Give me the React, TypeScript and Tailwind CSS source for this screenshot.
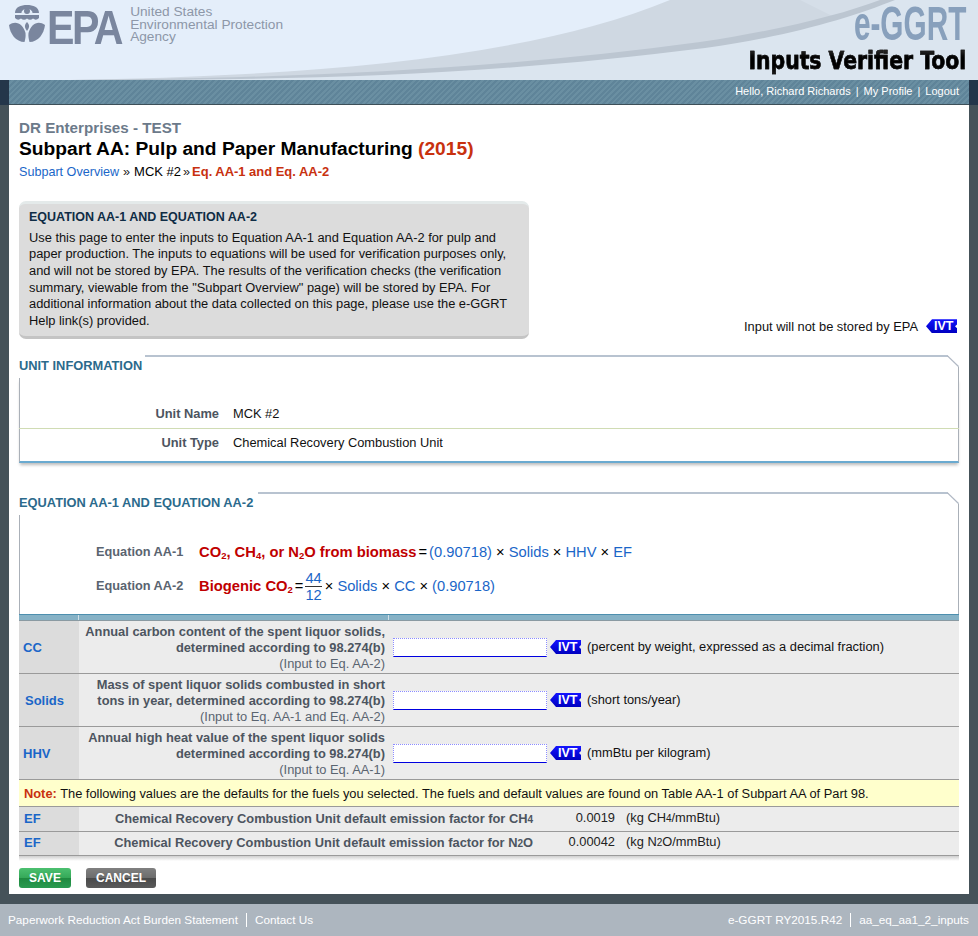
import React from "react";

const F = "font-['Liberation_Sans',Arial,sans-serif]";

function Ivt() {
  return (
    <span className="inline-flex h-[14px] w-[31px] shrink-0 items-center overflow-hidden pl-[8px] text-[12.5px] font-bold leading-none text-white bg-gradient-to-b from-[#1414ff] to-[#0000c0] [clip-path:polygon(0_50%,6px_0,100%_0,100%_36%,29px_50%,100%_64%,100%_100%,6px_100%)]">
      IVT
    </span>
  );
}

function Sec({ title, headW, children }: { title: string; headW: string; children: React.ReactNode }) {
  return (
    <section className="relative">
      <div className="flex h-[23px]">
        <h2 className={`shrink-0 pt-[4px] text-[12.85px] font-bold leading-[14px] text-[#2b6a8c] ${headW}`}>{title}</h2>
        <div className="grow border-r border-t-2 border-r-[#aab0b8] border-t-[#b8c3d0]" />
      </div>
      <svg className="absolute right-0 top-0 h-[12px] w-[12px]" viewBox="0 0 12 12">
        <polygon points="0,0 12,0 12,12" fill="#fff" />
        <path d="M0 .5 L11.5 11.5" stroke="#b0b8c4" strokeWidth="1.2" fill="none" />
      </svg>
      {children}
    </section>
  );
}

function Row({ sym, sw, l1, l2, l3, unit }: { sym: string; sw?: string; l1: string; l2: string; l3: string; unit: string }) {
  return (
    <div className="flex h-[53px] border-b border-[#9a9a9a] bg-[#ececec]">
      <div className={`flex w-[60px] shrink-0 items-center bg-[#dcdcdc] pt-[1px] text-[13px] font-bold text-[#1a66c8] ${sw ?? "pl-[4px]"}`}>{sym}</div>
      <div className="w-[310px] shrink-0 pr-[4px] pt-[3px] text-right text-[12.85px] leading-[16px]">
        <div className="font-bold text-[#4d5560]">{l1}</div>
        <div className="font-bold text-[#4d5560]">{l2}</div>
        <div className="text-[#5a6470]">{l3}</div>
      </div>
      <div className="flex grow items-center pl-[4px] text-[12.85px] text-[#111]">
        <div className="h-[19px] w-[154px] border border-dotted border-[#8c8cff] border-b-[#0000e0] bg-white [border-bottom-style:solid]" />
        <span className="ml-[3px] mr-[6px] flex"><Ivt /></span>
        <span>{unit}</span>
      </div>
    </div>
  );
}

function EfRow({ text, sub, tail, value, unit, h }: { text: string; sub: string; tail?: string; value: string; unit: React.ReactNode; h: string }) {
  return (
    <div className={`flex ${h} border-b border-[#9a9a9a] bg-[#ececec]`}>
      <div className="flex w-[60px] shrink-0 items-center bg-[#dcdcdc] pb-[1px] pl-[5px] text-[13px] font-bold text-[#1a66c8]">EF</div>
      <div className="flex w-[458px] shrink-0 items-center justify-end pb-[1px] pr-[4px] text-[12.85px] font-bold text-[#4d5560]">
        <span>{text}<span className="text-[10px]">{sub}</span>{tail}</span>
      </div>
      <div className="flex w-[78px] shrink-0 items-center justify-end pb-[3px] text-[12.85px] text-[#222]">{value}</div>
      <div className="flex items-center pb-[3px] pl-[11px] text-[12.85px] text-[#222]">{unit}</div>
    </div>
  );
}

export default function App() {
  return (
    <div className={`${F} h-[936px] w-[978px] overflow-hidden bg-[#455259]`}>
      {/* Header */}
      <header className="relative h-[80px] overflow-hidden bg-[#e4eefa]">
        <svg className="absolute inset-0 h-full w-full" viewBox="0 0 978 80" preserveAspectRatio="none">
          <path d="M70 80 C 290 76, 520 62, 670 0 L978 0 L978 80 Z" fill="#cfd8e2" />
          <path d="M800 0 L978 0 L978 30 L860 30 Z" fill="#d5dee8" />
          <path d="M70 80 C 300 78, 490 70, 700 42 C 780 30, 840 15, 880 0 L978 0 L978 80 Z" fill="#bcc6d1" />
          <path d="M110 80 C 320 80, 500 74, 705 48 C 790 36, 850 18, 895 0 L978 0 L978 80 Z" fill="#dbe5ef" />
        </svg>
        <div className="absolute left-[9px] top-[5px] flex items-start">
          <svg className="h-[37px] w-[36px]" viewBox="0 0 36 37" fill="#7a869e">
            <path d="M6 8 C6 2 12 0 18 0 C24 0 30 2 30 8 L23.5 8 C23.5 5.5 21 4 18 4 C15 4 12.5 5.5 12.5 8 Z" />
            <circle cx="18" cy="6" r="3" />
            <path d="M6 10 L30 10 L30 13 Q 27 16 24 13.5 Q 21 16 18 13.5 Q 15 16 12 13.5 Q 9 16 6 13 Z" />
            <path d="M0 20 C7 15 14 19 16.5 28 C16.8 31 16.4 34 15.5 37 C7 37 1 29 0 20 Z" />
            <path d="M36 20 C29 15 22 19 19.5 28 C19.2 31 19.6 34 20.5 37 C29 37 35 29 36 20 Z" />
            <path d="M18 17 C20.5 19.5 21 22 18 26 C15 22 15.5 19.5 18 17 Z" />
          </svg>
          <span className="ml-[2px] mr-[-11px] mt-[-6px] origin-left scale-x-[0.84] whitespace-nowrap text-[49px] font-bold leading-[56px] tracking-[-3px] text-[#7a869e]">EPA</span>
          <div className="ml-[6px] mt-[1px] whitespace-nowrap text-[13.7px] leading-[12.6px] text-[#8d97a8]">
            <div>United States</div>
            <div>Environmental Protection</div>
            <div>Agency</div>
          </div>
        </div>
        <div className="absolute right-[12px] top-0 origin-right scale-x-[0.62] text-[48px] font-bold leading-[48px] text-[#88a0bc]">e-GGRT</div>
        <div className="absolute right-[12px] top-[46px] origin-right scale-x-[0.815] bg-gradient-to-b from-[#444] via-[#000] to-[#222] bg-clip-text font-['DejaVu_Sans',sans-serif] text-[25px] font-bold leading-[30px] text-transparent [-webkit-text-stroke:0.5px_#111]">Inputs Verifier Tool</div>
      </header>

      {/* Nav */}
      <div className="flex h-[25px]">
        <div className="w-[9px] shrink-0 bg-[#24364a]" />
        <nav className="flex grow items-center justify-end gap-[5px] border-b border-[#3d4f58] bg-[repeating-linear-gradient(135deg,#5f8499_0,#5f8499_2px,#6a8fa2_2px,#6a8fa2_4px)] pb-[2px] pr-[10px] text-[11px] text-white">
          <span>Hello, Richard Richards</span><span>|</span><span>My Profile</span><span>|</span><span>Logout</span>
        </nav>
        <div className="w-[9px] shrink-0 bg-[#24364a]" />
      </div>

      {/* Main */}
      <main className="mx-[9px] h-[789px] bg-white px-[10px] pt-[15px]">
        <div className="text-[15.2px] font-bold leading-[16px] text-[#6c7a8a]">DR Enterprises - TEST</div>
        <h1 className="mt-[2px] text-[19.2px] font-bold leading-[22px] text-black">
          Subpart AA: Pulp and Paper Manufacturing <span className="text-[#c8310f]">(2015)</span>
        </h1>
        <div className="mt-[4px] flex items-baseline text-[12.6px] leading-[15px]">
          <span className="text-[#1a66c8]">Subpart Overview</span>
          <span className="mx-[4px] text-[#222]">»</span>
          <span className="text-[13px] text-black">MCK #2</span>
          <span className="mx-[2px] text-[#222]">»</span>
          <span className="text-[12.95px] font-bold text-[#c8310f]">Eq. AA-1 and Eq. AA-2</span>
        </div>

        <div className="relative mt-[21px] flex items-end">
          <div className="h-[138px] w-[510px] rounded-[7px] border-b-[3px] border-t-[3px] border-b-[#c4c4c4] border-t-[#e4eaea] bg-[#dcdcdc] px-[10px] pt-[5px] text-[12.85px] leading-[16.67px] text-[#111]">
            <div className="mb-[4px] text-[12.5px] font-bold text-[#0f2c45]">EQUATION AA-1 AND EQUATION AA-2</div>
            Use this page to enter the inputs to Equation AA-1 and Equation AA-2 for pulp and paper production. The inputs to equations will be used for verification purposes only, and will not be stored by EPA. The results of the verification checks (the verification summary, viewable from the "Subpart Overview" page) will be stored by EPA. For additional information about the data collected on this page, please use the e-GGRT Help link(s) provided.
          </div>
          <div className="ml-auto flex items-center gap-[8px] pb-[3px] pr-[2px] text-[12.85px] text-[#111]">
            <span>Input will not be stored by EPA</span>
            <Ivt />
          </div>
        </div>

        <div className="mt-[16px]">
          <Sec title="UNIT INFORMATION" headW="w-[126px]">
            <div className="h-[85px] border-x border-b-2 border-[#aab0b8] border-b-[#6aaad0] shadow-[0_3px_3px_-1px_#bbb]">
              <div className="flex h-[51px] items-end border-b border-[#d0dcb4] pb-[5px] text-[12.85px] [margin-inline:-1px]">
                <div className="w-[200px] text-right font-bold text-[#4d5560]">Unit Name</div>
                <div className="pl-[14px] text-[#111]">MCK #2</div>
              </div>
              <div className="flex h-[32px] items-start pt-[4px] text-[12.85px]">
                <div className="w-[199px] text-right font-bold text-[#4d5560]">Unit Type</div>
                <div className="pl-[14px] text-[#111]">Chemical Recovery Combustion Unit</div>
              </div>
            </div>
          </Sec>
        </div>

        <div className="mt-[29px]">
          <Sec title="EQUATION AA-1 AND EQUATION AA-2" headW="w-[239px]">
            <div className="h-[99px] border-x border-[#aab0b8] pl-[76px] pt-[25px]">
              <div className="flex h-[24px] items-center">
                <span className="w-[103px] text-[12.75px] font-bold text-[#5a6470]">Equation AA-1</span>
                <span className="text-[14.75px] font-bold text-[#c00000]">CO<sub className="align-baseline text-[9.5px]">2</sub>, CH<sub className="align-baseline text-[9.5px]">4</sub>, or N<sub className="align-baseline text-[9.5px]">2</sub>O from biomass</span>
                <span className="mx-[2px] text-[14.7px] text-black">=</span>
                <span className="text-[14.7px] text-[#1a66c8]">(0.90718) <span className="text-black">×</span> Solids <span className="text-black">×</span> HHV <span className="text-black">×</span> EF</span>
              </div>
              <div className="mt-[2px] flex h-[40px] items-center">
                <span className="w-[103px] text-[12.75px] font-bold text-[#5a6470]">Equation AA-2</span>
                <span className="text-[14.75px] font-bold text-[#c00000]">Biogenic CO<sub className="align-baseline text-[9.5px]">2</sub></span>
                <span className="mx-[2px] text-[14.7px] text-black">=</span>
                <span className="mr-[3px] flex flex-col items-center text-[14.7px] leading-[16px] text-[#1a66c8]">
                  <span className="border-b border-[#333]">44</span>
                  <span>12</span>
                </span>
                <span className="text-[14.7px] text-[#1a66c8]"><span className="text-black">×</span> Solids <span className="text-black">×</span> CC <span className="text-black">×</span> (0.90718)</span>
              </div>
            </div>
          </Sec>
          <div className="flex h-[7px] border-y border-t-[#4d8fae] border-b-[#8a9aa2] bg-[#86b2c6]">
            <div className="w-[60px] border-r border-[#d0e0e8]" />
            <div className="w-[310px] border-r border-[#d0e0e8]" />
          </div>
          <Row sym="CC" l1="Annual carbon content of the spent liquor solids," l2="determined according to 98.274(b)" l3="(Input to Eq. AA-2)" unit="(percent by weight, expressed as a decimal fraction)" />
          <Row sym="Solids" sw="pl-[6px]" l1="Mass of spent liquor solids combusted in short" l2="tons in year, determined according to 98.274(b)" l3="(Input to Eq. AA-1 and Eq. AA-2)" unit="(short tons/year)" />
          <Row sym="HHV" l1="Annual high heat value of the spent liquor solids" l2="determined according to 98.274(b)" l3="(Input to Eq. AA-1)" unit="(mmBtu per kilogram)" />
          <div className="flex h-[27px] items-center border-b border-[#9a9a9a] bg-[#ffffcc] pl-[5px] pt-[1px] text-[12.85px] text-[#111]">
            <span><b className="text-[#c8310f]">Note:</b> The following values are the defaults for the fuels you selected. The fuels and default values are found on Table AA-1 of Subpart AA of Part 98.</span>
          </div>
          <EfRow h="h-[25px]" text="Chemical Recovery Combustion Unit default emission factor for CH" sub="4" value="0.0019" unit={<span>(kg CH<span className="text-[10px]">4</span>/mmBtu)</span>} />
          <EfRow h="h-[24px]" text="Chemical Recovery Combustion Unit default emission factor for N" sub="2" tail="O" value="0.00042" unit={<span>(kg N<span className="text-[10px]">2</span>O/mmBtu)</span>} />
          <div className="h-[5px] bg-gradient-to-b from-[#cfcfcf] to-white" />
        </div>

        <div className="mt-[7px] flex gap-[15px]">
          <button className="flex h-[20px] w-[52px] items-center justify-center rounded-[3px] bg-[linear-gradient(#4cc070_0,#35a858_50%,#1f8a40_52%,#2a9a50_100%)] pb-[1px] text-[12px] font-bold text-white">SAVE</button>
          <button className="flex h-[20px] w-[70px] items-center justify-center rounded-[3px] bg-[linear-gradient(#808080_0,#6c6c6c_50%,#4a4a4a_52%,#5a5a5a_100%)] pb-[1px] text-[12px] font-bold text-white">CANCEL</button>
        </div>
      </main>

      {/* Footer */}
      <footer className="mt-[10px] flex h-[32px] items-center justify-between bg-[#adb6bf] px-[8px] text-[11.75px] text-white">
        <div className="flex items-center">
          <span className="pr-[8px]">Paperwork Reduction Act Burden Statement</span>
          <span className="border-l border-white pl-[8px] leading-[14px]">Contact Us</span>
        </div>
        <div className="flex items-center pr-[1px]">
          <span className="pr-[8px]">e-GGRT RY2015.R42</span>
          <span className="border-l border-white pl-[8px] leading-[14px]">aa_eq_aa1_2_inputs</span>
        </div>
      </footer>
    </div>
  );
}
